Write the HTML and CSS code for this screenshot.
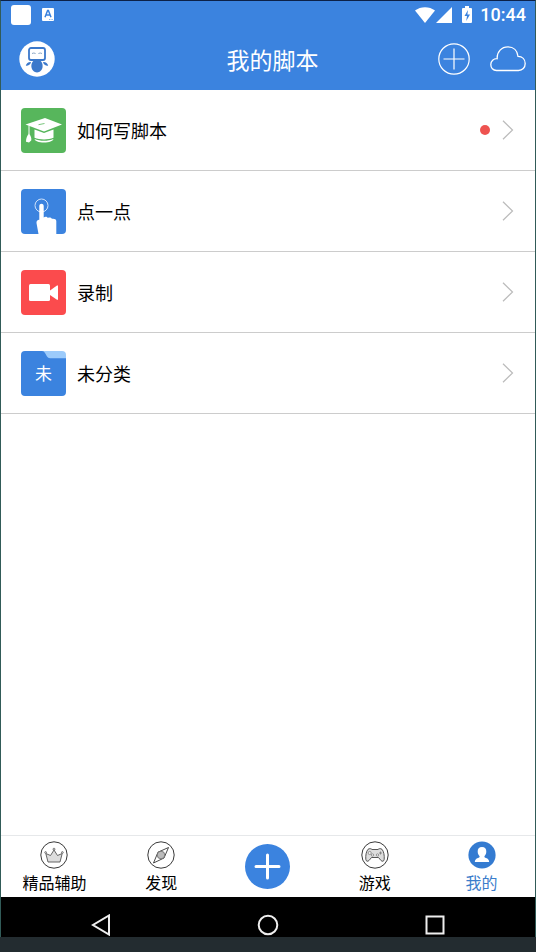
FILE: index.html
```html
<!DOCTYPE html>
<html lang="zh-CN">
<head>
<meta charset="utf-8">
<meta name="viewport" content="width=device-width, initial-scale=1">
<title>我的脚本</title>
<link rel="stylesheet" href="styles.css">
</head>
<body>
<div class="phone">
  <header class="header">
    <div class="status">
      <svg class="status-app" viewBox="0 0 20 20" aria-hidden="true"><rect width="20" height="20" rx="3" fill="#fff"/></svg>
      <svg class="status-ime" viewBox="0 0 12 13" aria-hidden="true"><rect width="12" height="13" rx="1" fill="#fff"/><path d="M3 9.300 5.600 2.500h.8L9 9.300M4 7h4" fill="none" stroke="#3b83df" stroke-width="1.500"/><path d="M7 11.500h4" stroke="#3b83df" stroke-width=".6" stroke-dasharray="1 .6"/></svg>
      <div class="status-right">
        <svg class="wifi" viewBox="0 0 20 16" aria-hidden="true"><path d="M0 3.500C5.500-1 14.500-1 20 3.500L10 16Z" fill="#fff"/></svg>
        <svg class="signal" viewBox="0 0 16 16" aria-hidden="true"><path d="M16 0v16H0Z" fill="#fff"/></svg>
        <svg class="battery" viewBox="0 0 10 17" aria-hidden="true"><path d="M3 0h4v2h2q1 0 1 1v13q0 1-1 1H1q-1 0-1-1V3q0-1 1-1h2Z" fill="#fff"/><path d="M6 4 2.500 10H5l-.8 5L8 8.500H5.400Z" fill="#3b83df"/></svg>
        <span class="clock">10:44</span>
      </div>
    </div>
    <div class="titlebar">
      <button class="plain avatar" aria-label="头像">
        <svg viewBox="0 0 36 36"><circle cx="18" cy="18" r="17.700" fill="#fff"/><rect x="10" y="7" width="16" height="12" rx="2" fill="#fff" stroke="#3b78cb" stroke-width="1.800"/><path d="M13 12.500q1.800-1 3.600 0M19.400 12.500q1.800-1 3.600 0" fill="none" stroke="#7f9dbe" stroke-width=".9"/><path d="M14.500 19.800h7c1.700 1.700 2.300 3.700 2.100 6-.3 3.300-2.700 5.700-5.600 5.700s-5.300-2.400-5.600-5.700c-.2-2.300.4-4.300 2.100-6Z" fill="#3b78cb"/><path d="M12 21c-2.500-.3-4.700 1.300-5.200 3.800 2.400.3 4.600-1 5.200-3.800ZM24 21c2.500-.3 4.700 1.300 5.200 3.800-2.400.3-4.600-1-5.200-3.800Z" fill="#3b78cb"/></svg>
      </button>
      <h1 class="title">我的脚本</h1>
      <div class="actions">
        <button class="plain add" aria-label="添加"><svg viewBox="0 0 32 32" fill="none" stroke="#fff" stroke-width="1.200"><circle cx="16" cy="16" r="15.200"/><path d="M16 5.500v21M5.500 16h21"/></svg></button>
        <button class="plain cloud" aria-label="云端"><svg viewBox="0 0 36 26" fill="none" stroke="#fff" stroke-width="1.300"><path d="M6.500 24.500C3 24.500.8 22 .8 18.500c0-3.600 2.800-6 6.400-5.800C6.800 5.500 11.700.9 18 .9c5.500 0 9.400 3.700 10 9.400 4.300.1 7.200 3.100 7.200 7.200s-2.800 7-6.700 7Z"/></svg></button>
      </div>
    </div>
  </header>

  <main class="list">
    <a class="row" href="#howto">
      <svg class="tile" viewBox="0 0 45 45" aria-hidden="true"><rect width="45" height="45" rx="4" fill="#57b65c"/><path d="M4.500 16.500 24 10 41 16.500 23 23.500Z" fill="#fff"/><path d="m23.500 15.500-6 1.200" stroke="#57b65c" stroke-width=".8"/><path d="M8 17.500v9" stroke="#fff" stroke-width="1"/><path d="M8 25.500c1.800 2.200 2.700 4.500 2.200 7L8 34.500l-3-.8c0-3.200 1-6.200 3-8.200Z" fill="#fff"/><path d="M13.500 21.500 23 25l9.500-3.500v8.300c-5.300 2.300-13.700 2.300-19 0Z" fill="#fff"/><path d="M13.500 31c5.300 2.400 13.700 2.400 19 0-.6 2-4.200 3.500-9.500 3.500S14 33 13.500 31Z" fill="#fff"/></svg>
      <span class="name">如何写脚本</span>
      <span class="dot"></span>
      <svg class="chevron" viewBox="0 0 12 20" aria-hidden="true"><path d="m1 .8 9.500 9.200L1 19.200"/></svg>
    </a>
    <a class="row" href="#tap">
      <svg class="tile" viewBox="0 0 45 45" aria-hidden="true"><rect width="45" height="45" rx="4" fill="#3b83df"/><circle cx="20.500" cy="16.500" r="6.500" fill="none" stroke="#cfe2fa" stroke-width="1"/><path d="M17.500 45 15.500 34C15.300 32 16.300 31 18.300 30.700V17c0-3 4.400-3 4.400 0v11.500c1.300-1 3.500-.8 4.200.5 1.300-.8 3.300-.4 4 .8 2.200-.4 4.400.3 4.400 2.300V45Z" fill="#fff"/></svg>
      <span class="name">点一点</span>
      <svg class="chevron" viewBox="0 0 12 20" aria-hidden="true"><path d="m1 .8 9.500 9.200L1 19.200"/></svg>
    </a>
    <a class="row" href="#record">
      <svg class="tile" viewBox="0 0 45 45" aria-hidden="true"><rect width="45" height="45" rx="4" fill="#fb4b4d"/><rect x="8" y="14" width="21" height="17" rx="1.500" fill="#fff"/><path d="M29 20.500 36 15.500h1v14.300h-1L29 25Z" fill="#fff"/></svg>
      <span class="name">录制</span>
      <svg class="chevron" viewBox="0 0 12 20" aria-hidden="true"><path d="m1 .8 9.500 9.200L1 19.200"/></svg>
    </a>
    <a class="row" href="#uncategorized">
      <svg class="tile" viewBox="0 0 45 45" aria-hidden="true"><path d="M20 0h21q4 0 4 4v10H20Z" fill="#9ccbfb"/><path d="M4 0h17q2 0 3 2l2 3.500q1 1.800 3 1.800h16V41q0 4-4 4H4q-4 0-4-4V4q0-4 4-4Z" fill="#3b83df"/><text x="22.500" y="29" class="tile-text">未</text></svg>
      <span class="name">未分类</span>
      <svg class="chevron" viewBox="0 0 12 20" aria-hidden="true"><path d="m1 .8 9.500 9.200L1 19.200"/></svg>
    </a>
  </main>

  <nav class="tabs">
    <a class="tab" href="#featured">
      <svg viewBox="0 0 28 28" aria-hidden="true"><circle cx="14" cy="14" r="13.200" fill="#fff" stroke="#222" stroke-width=".9"/><path d="M8 21 5.800 12.500 10.500 14.500 14 9l3.500 5.500 4.700-2L20 21Z" fill="#ddd" stroke="#555" stroke-width=".9" stroke-linejoin="round"/><g fill="#ddd" stroke="#555" stroke-width=".7"><circle cx="5.600" cy="11.500" r=".9"/><circle cx="14" cy="8.200" r="1"/><circle cx="22.400" cy="11.500" r=".9"/></g></svg>
      <span>精品辅助</span>
    </a>
    <a class="tab" href="#discover">
      <svg viewBox="0 0 28 28" aria-hidden="true"><circle cx="14" cy="14" r="13.200" fill="#fff" stroke="#222" stroke-width=".9"/><path d="m21.500 6.500-4.500 10.500L6.500 22 11 11.200Z" fill="#fff" stroke="#333" stroke-width=".9"/><circle cx="14" cy="14" r="3.800" fill="#bbb" stroke="#666" stroke-width=".8"/></svg>
      <span>发现</span>
    </a>
    <button class="plain create" aria-label="新建"><svg viewBox="0 0 45 45"><circle cx="22.500" cy="22.500" r="22.500" fill="#3b83df"/><path d="M22.500 11v23M11 22.500h23" stroke="#fff" stroke-width="3" stroke-linecap="round"/></svg></button>
    <a class="tab" href="#games">
      <svg viewBox="0 0 28 28" aria-hidden="true"><circle cx="14" cy="14" r="13.200" fill="#fff" stroke="#222" stroke-width=".9"/><path d="M7 8.300c1.500-1 3-.8 4 .2h6c1-1 2.500-1.200 4-.2 1.800 2.200 2.500 6 2.200 10-.2 2.300-2 2.500-3.400 1L17.500 16.500h-7L8.200 19.300c-1.400 1.500-3.200 1.300-3.400-1-.3-4 .4-7.800 2.200-10Z" fill="#ddd" stroke="#444" stroke-width=".9"/><g fill="#eee" stroke="#777" stroke-width=".7"><circle cx="8.700" cy="12" r="1.600"/><circle cx="16.500" cy="14" r="1.200"/><circle cx="11.500" cy="14" r="1.200"/></g><path d="M19.500 10.500v3M18 12h3" stroke="#777" stroke-width=".8"/></svg>
      <span>游戏</span>
    </a>
    <a class="tab active" href="#mine" aria-current="page">
      <svg viewBox="0 0 28 28" aria-hidden="true"><circle cx="14" cy="14" r="13.600" fill="#347bd1"/><path d="M14 6c2.900 0 4.500 2 4.300 4.700-.1 2-.8 3.400-1.900 4.500 0 1 .6 1.500 1.600 1.900 2 .7 3 1.700 3.200 4H6.800c.2-2.300 1.200-3.300 3.200-4 1-.4 1.600-.9 1.600-1.900-1.100-1.100-1.800-2.500-1.900-4.500C9.500 8 11.100 6 14 6Z" fill="#fff"/></svg>
      <span>我的</span>
    </a>
  </nav>

  <div class="system">
    <button class="plain" aria-label="返回"><svg viewBox="0 0 22 22"><path d="M19 1.500v19L3 11Z"/></svg></button>
    <button class="plain" aria-label="主页"><svg viewBox="0 0 22 22"><circle cx="11" cy="11" r="9.300"/></svg></button>
    <button class="plain" aria-label="最近任务"><svg viewBox="0 0 22 22"><path d="M2.500 2.500h17v17h-17Z"/></svg></button>
  </div>
</div>
</body>
</html>
```
FILE: styles.css
```css
* {
  box-sizing: border-box;
}

body {
  margin: 0;
  background: #232c30;
  font-family: "Noto Sans CJK SC", sans-serif;
  color: #000;
}

svg {
  display: block;
  flex: none;
}

a {
  color: inherit;
  text-decoration: none;
}

.plain {
  display: block;
  padding: 0;
  border: 0;
  background: none;
  cursor: pointer;
}

.plain svg {
  width: 100%;
  height: 100%;
}

.phone {
  display: flex;
  flex-direction: column;
  min-height: calc(100vh - 15px);
  border: 1px solid #315b58;
  border-top-color: #0c2148;
  border-bottom: 0;
  background: #fff;
}

.header {
  background: #3b83df;
  color: #fff;
}

.status {
  display: flex;
  align-items: center;
  height: 27px;
  padding: 0 9px 0 10px;
}

.status-app {
  width: 20px;
  height: 20px;
}

.status-ime {
  width: 12px;
  height: 13px;
  margin-left: 11px;
}

.status-right {
  display: flex;
  align-items: center;
  margin-left: auto;
}

.wifi {
  width: 20px;
  height: 16px;
}

.signal {
  width: 16px;
  height: 16px;
  margin-left: 1px;
}

.battery {
  width: 10px;
  height: 17px;
  margin-left: 10px;
}

.clock {
  margin-left: 8px;
  font-family: Roboto, sans-serif;
  font-size: 18px;
  font-weight: 500;
  line-height: 27px;
}

.titlebar {
  display: grid;
  grid-template-columns: 1fr auto 1fr;
  align-items: center;
  height: 62px;
  padding: 0 9px 0 18px;
}

.avatar {
  width: 36px;
  height: 36px;
}

.title {
  margin: 0;
  font-size: 23px;
  font-weight: 400;
  line-height: 32px;
}

.actions {
  display: flex;
  align-items: center;
  justify-content: flex-end;
  gap: 20px;
}

.add {
  width: 32px;
  height: 32px;
}

.cloud {
  width: 36px;
  height: 26px;
}

.list {
  flex: 1;
}

.row {
  display: flex;
  align-items: center;
  height: 81px;
  padding: 0 21px 0 20px;
  border-bottom: 1px solid #ccc;
}

.tile {
  width: 45px;
  height: 45px;
}

.tile-text {
  fill: #fff;
  font-size: 17px;
  text-anchor: middle;
}

.name {
  flex: 1;
  margin-left: 11px;
  font-size: 18px;
  line-height: 26px;
}

.dot {
  width: 10px;
  height: 10px;
  margin-right: 12px;
  border-radius: 50%;
  background: #ee5350;
}

.chevron {
  width: 12px;
  height: 20px;
  fill: none;
  stroke: #bbb;
  stroke-width: 1.2;
}

.tabs {
  display: grid;
  grid-template-columns: repeat(5, 1fr);
  height: 62px;
  border-top: 1px solid #e6e8ea;
}

.tab {
  display: flex;
  flex-direction: column;
  align-items: center;
  padding-top: 5px;
  font-size: 16px;
  line-height: 26px;
}

.tab svg {
  width: 28px;
  height: 28px;
}

.tab.active {
  color: #3b7dcb;
}

.create {
  place-self: center;
  width: 45px;
  height: 45px;
}

.system {
  display: flex;
  justify-content: space-around;
  align-items: flex-end;
  height: 40px;
  padding: 0 17px;
  background: #000;
}

.system button {
  width: 22px;
  height: 22px;
  margin-bottom: 1px;
}

.system svg {
  fill: none;
  stroke: #eee;
  stroke-width: 2;
}
```
